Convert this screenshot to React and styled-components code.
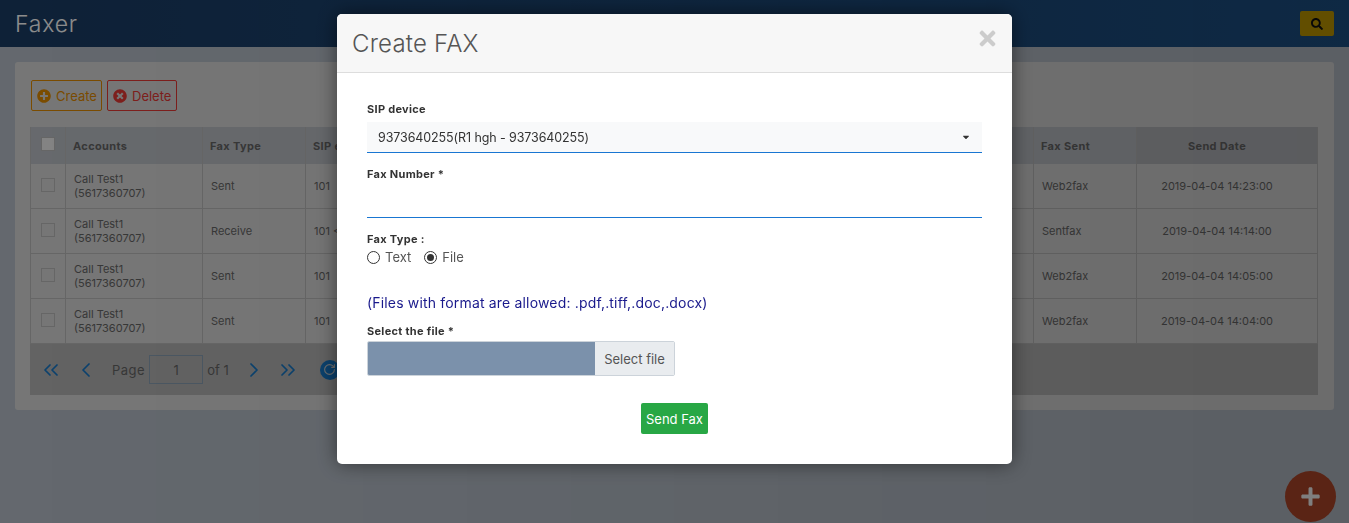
import React from 'react';
import styled, { createGlobalStyle } from 'styled-components';
import { FaPlusCircle, FaTimesCircle, FaSearch, FaPlus, FaTimes, FaCaretDown } from 'react-icons/fa';
import { ChevronLeft, ChevronRight, ChevronsLeft, ChevronsRight, RotateCw } from 'lucide-react';

const GlobalStyle = createGlobalStyle`
    html, body {
        margin: 0;
        height: 100%;
        overflow: hidden;
        background: #b6bec8;
        font-family: Inter, "Liberation Sans", sans-serif;
    }
    * { box-sizing: border-box; }
`;

const TopBar = styled.header`
    height: 47px;
    padding: 11px 15px 0;
    display: flex;
    justify-content: space-between;
    align-items: flex-start;
    background: linear-gradient(90deg, #1a3c64, #1d5288);
`;

const Brand = styled.h1`
    margin: 0;
    font-size: 23px;
    line-height: 27px;
    font-weight: 300;
    color: #fff;
    letter-spacing: 0.8px;
`;

const SearchButton = styled.button`
    width: 34px;
    height: 25px;
    padding: 0;
    border: 0;
    border-radius: 2px;
    background: #c49c00;
    color: #111;
    font-size: 12px;
    display: flex;
    align-items: center;
    justify-content: center;
`;

const Card = styled.main`
    margin: 15px 15px 0;
    height: 348px;
    padding: 18px 16px 15px 15px;
    background: #d8d8d8;
    border-radius: 3px;
`;

const Actions = styled.div`
    display: flex;
    gap: 5px;
    margin: 0 0 16px 1px;
`;

const ActionButton = styled.button`
    height: 31px;
    width: ${p => p.$width}px;
    padding: 0 0 0 5px;
    display: flex;
    align-items: center;
    gap: 5px;
    background: transparent;
    border: 1px solid ${p => p.$color};
    border-radius: 2px;
    color: ${p => p.$color};
    font: 400 13px Inter, sans-serif;
    svg { font-size: 14px; }
`;

const Table = styled.div`
    font-size: 11px;
    color: #666;
`;

const Row = styled.div`
    display: grid;
    grid-template-columns: 35px 137px 103px 1fr 103px 182px;
    height: ${p => (p.$head ? 37 : 45)}px;
    background: ${p => (p.$head ? '#bcc0c6' : 'transparent')};
    border-bottom: ${p => (p.$head ? 0 : '1px solid #bbb')};
`;

const Cell = styled.div`
    display: flex;
    align-items: center;
    padding: ${p => (p.$date ? '0 20px 0 0' : p.$head ? '0 7px' : '0 8px')};
    line-height: 14px;
    font-weight: ${p => (p.$head ? 700 : 400)};
    letter-spacing: ${p => (p.$head ? '0.35px' : '0')};
    border-left: 1px solid #bbb;
    justify-content: ${p => (p.$date || p.$tick ? 'center' : 'flex-start')};
    background: ${p => (p.$dark ? '#b6b8bd' : 'transparent')};
    white-space: nowrap;
    &:last-child { border-right: 1px solid #bbb; }
`;

const Tick = styled.span`
    width: 14px;
    height: 14px;
    margin-top: ${p => (p.$head ? -4 : -2)}px;
    border: 1px solid #bbb;
    background: ${p => (p.$head ? '#eee' : 'transparent')};
`;

const Pager = styled.div`
    height: 51px;
    padding: 0 0 0 9px;
    background: #b4b4b4;
    display: flex;
    align-items: center;
    color: #1578c8;
    font-size: 13px;
`;

const PagerIcon = styled.span`
    display: flex;
    margin-right: ${p => p.$gap}px;
`;

const PageText = styled.span`
    color: #666;
    letter-spacing: ${p => p.$spacing}px;
    margin-right: ${p => p.$gap}px;
`;

const PageInput = styled.div`
    width: 54px;
    height: 29px;
    margin-right: 4px;
    border: 1px solid #8aa0b4;
    color: #666;
    display: flex;
    align-items: center;
    justify-content: center;
`;

const Refresh = styled.span`
    width: 20px;
    height: 20px;
    border-radius: 50%;
    background: #1578c8;
    color: #ccc;
    display: flex;
    align-items: center;
    justify-content: center;
`;

const Fab = styled.button`
    position: absolute;
    right: 13px;
    top: 471px;
    width: 51px;
    height: 51px;
    padding: 0;
    border: 0;
    border-radius: 50%;
    background: #b4482a;
    color: #fff;
    font-size: 21px;
    display: flex;
    align-items: center;
    justify-content: center;
`;

const Backdrop = styled.div`
    position: fixed;
    inset: 0;
    display: flex;
    justify-content: center;
    align-items: flex-start;
    padding-top: 14px;
    background: linear-gradient(90deg, rgba(0, 0, 0, 0.45), rgba(0, 0, 0, 0.5));
`;

const Modal = styled.div`
    width: 675px;
    height: 450px;
    background: #fff;
    border-radius: 5px;
    box-shadow: 0 0 20px rgba(0, 0, 0, 0.5);
    overflow: hidden;
`;

const ModalHead = styled.div`
    height: 59px;
    padding: 0 15px;
    display: flex;
    justify-content: space-between;
    align-items: center;
    background: #f7f7f7;
    border-bottom: 1px solid #ddd;
`;

const ModalTitle = styled.h2`
    margin: 0;
    font-size: 24px;
    font-weight: 300;
    letter-spacing: 0.2px;
    color: #555;
`;

const Close = styled.span`
    display: flex;
    color: #ccc;
    font-size: 23px;
    margin: -10px -2px 0 0;
`;

const ModalBody = styled.div`
    padding: 29px 30px 0;
`;

const Label = styled.div`
    font-size: 11px;
    line-height: 14px;
    font-weight: 700;
    letter-spacing: 0.3px;
    color: #333;
    margin-top: ${p => p.$top || 0}px;
`;

const Select = styled.div`
    height: 31px;
    margin-top: 6px;
    padding: 0 11px;
    display: flex;
    align-items: center;
    justify-content: space-between;
    background: #f8f9fa;
    border-bottom: 1px solid #1976d2;
    color: #333;
    font-size: 12.5px;
    letter-spacing: -0.1px;
    svg { font-size: 10px; }
`;

const Input = styled.div`
    height: 37px;
    border-bottom: 1px solid #1976d2;
`;

const Radios = styled.div`
    display: flex;
    align-items: center;
    margin-top: 2px;
    font-size: 13px;
    color: #555;
    height: 18px;
`;

const RadioDot = styled.span`
    width: 13px;
    height: 13px;
    margin-right: 5px;
    border-radius: 50%;
    border: 1px solid #333;
    display: flex;
    align-items: center;
    justify-content: center;
    &::after {
        content: '';
        width: 7px;
        height: 7px;
        border-radius: 50%;
        background: ${p => (p.$on ? '#333' : 'transparent')};
    }
`;

const RadioText = styled.span`
    margin-right: ${p => p.$gap || 0}px;
`;

const Note = styled.div`
    margin-top: 27px;
    font-size: 14px;
    line-height: 20px;
    letter-spacing: 0.17px;
    color: #1a1a8c;
`;

const FileRow = styled.div`
    display: flex;
    width: 308px;
    height: 35px;
    margin-top: 3px;
    border: 1px solid #ccd3da;
    border-radius: 2px;
    overflow: hidden;
`;

const FileName = styled.div`
    width: 227px;
    background: #7b91ab;
`;

const FileButton = styled.div`
    flex: 1;
    background: #e9ecef;
    color: #555;
    font-size: 13px;
    display: flex;
    align-items: center;
    justify-content: center;
`;

const Submit = styled.div`
    display: flex;
    justify-content: center;
    margin-top: 27px;
`;

const SendButton = styled.button`
    width: 67px;
    height: 31px;
    padding: 0;
    border: 0;
    border-radius: 2px;
    background: #28a745;
    color: #fff;
    font: 400 13px Inter, sans-serif;
`;

const rows = [
    ['Sent', '101', 'Web2fax', '2019-04-04 14:23:00'],
    ['Receive', '101 <', 'Sentfax', '2019-04-04 14:14:00'],
    ['Sent', '101', 'Web2fax', '2019-04-04 14:05:00'],
    ['Sent', '101', 'Web2fax', '2019-04-04 14:04:00'],
];

function App() {
    return (
        <>
            <GlobalStyle />
            <TopBar>
                <Brand>Faxer</Brand>
                <SearchButton><FaSearch /></SearchButton>
            </TopBar>

            <Card>
                <Actions>
                    <ActionButton $width={71} $color="#e08a00"><FaPlusCircle />Create</ActionButton>
                    <ActionButton $width={70} $color="#e53935"><FaTimesCircle />Delete</ActionButton>
                </Actions>

                <Table>
                    <Row $head>
                        <Cell $head $tick><Tick $head /></Cell>
                        <Cell $head>Accounts</Cell>
                        <Cell $head>Fax Type</Cell>
                        <Cell $head>SIP ext</Cell>
                        <Cell $head>Fax Sent</Cell>
                        <Cell $head $date $dark>Send Date</Cell>
                    </Row>
                    {rows.map((r, i) => (
                        <Row key={i}>
                            <Cell $tick><Tick /></Cell>
                            <Cell>Call Test1<br />(5617360707)</Cell>
                            <Cell>{r[0]}</Cell>
                            <Cell>{r[1]}</Cell>
                            <Cell>{r[2]}</Cell>
                            <Cell $date>{r[3]}</Cell>
                        </Row>
                    ))}
                    <Pager>
                        <PagerIcon $gap={11}><ChevronsLeft size={24} strokeWidth={1.75} /></PagerIcon>
                        <PagerIcon $gap={14}><ChevronLeft size={24} strokeWidth={1.75} /></PagerIcon>
                        <PageText $gap={4} $spacing={0.5}>Page</PageText>
                        <PageInput>1</PageInput>
                        <PageText $gap={13} $spacing={0}>of 1</PageText>
                        <PagerIcon $gap={10}><ChevronRight size={24} strokeWidth={1.75} /></PagerIcon>
                        <PagerIcon $gap={20}><ChevronsRight size={24} strokeWidth={1.75} /></PagerIcon>
                        <Refresh><RotateCw size={13} /></Refresh>
                    </Pager>
                </Table>
            </Card>

            <Fab><FaPlus /></Fab>

            <Backdrop>
                <Modal>
                    <ModalHead>
                        <ModalTitle>Create FAX</ModalTitle>
                        <Close><FaTimes /></Close>
                    </ModalHead>
                    <ModalBody>
                        <Label>SIP device</Label>
                        <Select>
                            9373640255(R1 hgh - 9373640255)
                            <FaCaretDown />
                        </Select>
                        <Label $top={14}>Fax Number *</Label>
                        <Input />
                        <Label $top={14}>Fax Type :</Label>
                        <Radios>
                            <RadioDot />
                            <RadioText $gap={13}>Text</RadioText>
                            <RadioDot $on />
                            <RadioText>File</RadioText>
                        </Radios>
                        <Note>(Files with format are allowed: .pdf,.tiff,.doc,.docx)</Note>
                        <Label $top={11}>Select the file *</Label>
                        <FileRow>
                            <FileName />
                            <FileButton>Select file</FileButton>
                        </FileRow>
                        <Submit><SendButton>Send Fax</SendButton></Submit>
                    </ModalBody>
                </Modal>
            </Backdrop>
        </>
    );
}

export default App;
